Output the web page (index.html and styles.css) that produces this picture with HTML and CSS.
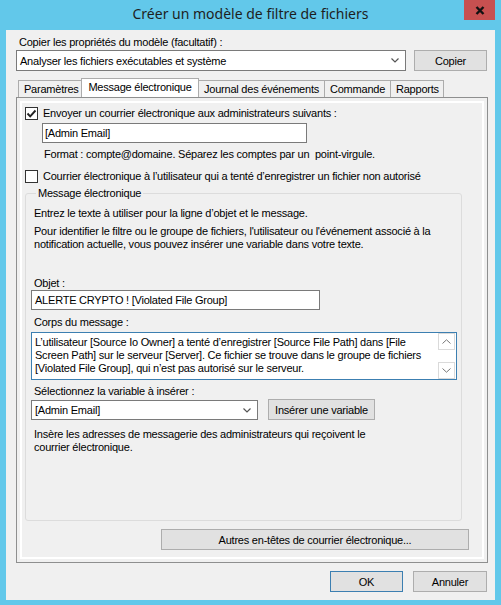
FILE: index.html
```html
<!DOCTYPE html>
<html lang="fr">
<head>
<meta charset="utf-8">
<title>Créer un modèle de filtre de fichiers</title>
<link rel="stylesheet" href="styles.css">
</head>
<body>
<div class="window">
  <div class="titlebar">
    <div></div>
    <div class="title">Créer un modèle de filtre de fichiers</div>
    <div class="close">
      <svg width="10" height="9" viewBox="0 0 10 9"><path d="M1.5 1 L8.5 8 M8.5 1 L1.5 8" stroke="#111" stroke-width="2.4" fill="none"/></svg>
    </div>
  </div>
  <div class="client">
    <div class="label">Copier les propriétés du modèle (facultatif) :</div>
    <div class="copy-row">
      <div class="combo combo-template">
        <span>Analyser les fichiers exécutables et système</span>
        <svg class="chev" width="8" height="5" viewBox="0 0 8 5"><path d="M0.5 0.5 L4 4 L7.5 0.5" stroke="#555" stroke-width="1.2" fill="none"/></svg>
      </div>
      <div class="btn btn-copy">Copier</div>
    </div>
    <div class="tabs">
      <div class="tab tab-first">Paramètres</div>
      <div class="tab tab-active">Message électronique</div>
      <div class="tab">Journal des événements</div>
      <div class="tab">Commande</div>
      <div class="tab">Rapports</div>
    </div>
    <div class="panel">
      <div class="page">
        <div class="check-row">
          <span class="checkbox"><svg width="11" height="11" viewBox="0 0 11 11"><path d="M1.5 5.5 L4.2 8.3 L9.5 2.5" stroke="#222" stroke-width="1.9" fill="none"/></svg></span>
          <span class="label">Envoyer un courrier électronique aux administrateurs suivants :</span>
        </div>
        <div class="field email-field">[Admin Email]</div>
        <div class="label hint">Format : compte@domaine. Séparez les comptes par un &nbsp;point-virgule.</div>
        <div class="check-row check-row-2">
          <span class="checkbox"></span>
          <span class="label">Courrier électronique à l’utilisateur qui a tenté d’enregistrer un fichier non autorisé</span>
        </div>
        <fieldset class="group">
          <legend class="legend">Message électronique</legend>
          <div class="label g-label intro-1">Entrez le texte à utiliser pour la ligne d’objet et le message.</div>
          <div class="label g-label intro-2">Pour identifier le filtre ou le groupe de fichiers, l'utilisateur ou l'événement associé à la<br>notification actuelle, vous pouvez insérer une variable dans votre texte.</div>
          <div class="label g-label subject-label">Objet :</div>
          <div class="field subject-field">ALERTE CRYPTO ! [Violated File Group]</div>
          <div class="label g-label body-label">Corps du message :</div>
          <div class="textarea">
            <div class="textarea-text">L’utilisateur [Source Io Owner] a tenté d’enregistrer [Source File Path] dans [File<br>Screen Path] sur le serveur [Server]. Ce fichier se trouve dans le groupe de fichiers<br>[Violated File Group], qui n’est pas autorisé sur le serveur.</div>
            <div class="scrollbar">
              <div class="sb-btn"><svg width="9" height="5" viewBox="0 0 9 5"><path d="M0.5 4.5 L4.5 0.8 L8.5 4.5" stroke="#777" stroke-width="1" fill="none"/></svg></div>
              <div class="sb-track"></div>
              <div class="sb-btn"><svg width="9" height="5" viewBox="0 0 9 5"><path d="M0.5 0.5 L4.5 4.2 L8.5 0.5" stroke="#777" stroke-width="1" fill="none"/></svg></div>
            </div>
          </div>
          <div class="label g-label var-label">Sélectionnez la variable à insérer :</div>
          <div class="var-row">
            <div class="combo combo-var">
              <span>[Admin Email]</span>
              <svg class="chev" width="8" height="5" viewBox="0 0 8 5"><path d="M0.5 0.5 L4 4 L7.5 0.5" stroke="#555" stroke-width="1.2" fill="none"/></svg>
            </div>
            <div class="btn btn-insert">Insérer une variable</div>
          </div>
          <div class="label g-label var-help">Insère les adresses de messagerie des administrateurs qui reçoivent le<br>courrier électronique.</div>
        </fieldset>
        <div class="btn btn-headers">Autres en-têtes de courrier électronique...</div>
      </div>
    </div>
    <div class="footer">
      <div class="btn btn-ok">OK</div>
      <div class="btn btn-cancel">Annuler</div>
    </div>
  </div>
</div>
</body>
</html>
```
FILE: styles.css
```css
* { box-sizing: border-box; }

body {
  margin: 0;
  background: #62c8ea;
  font-family: "Liberation Sans", Arial, sans-serif;
  font-size: 11px;
  letter-spacing: -0.22px;
  color: #000;
}

.window {
  width: 501px;
  height: 605px;
  background: #62c8ea;
}

.titlebar {
  height: 30px;
  display: grid;
  grid-template-columns: 1fr auto 1fr;
}

.title {
  font-family: "Noto Sans", "Open Sans", sans-serif;
  font-size: 14px;
  letter-spacing: 0;
  line-height: 28px;
  color: #1e1e1e;
  white-space: nowrap;
}

.close {
  justify-self: end;
  width: 31px;
  height: 20px;
  margin-right: 6px;
  background: #c75050;
  display: flex;
  align-items: center;
  justify-content: center;
}

.client {
  margin-left: 6px;
  width: 489px;
  height: 570px;
  background: #f0f0f0;
  padding: 6px 7px 0 10px;
  display: flex;
  flex-direction: column;
}

.label {
  line-height: 13px;
  white-space: nowrap;
}

.client > .label { margin-left: 3px; }

.copy-row {
  display: flex;
  justify-content: space-between;
  margin-top: 1px;
  margin-right: 1px;
}

.combo {
  display: flex;
  align-items: center;
  justify-content: space-between;
  background: #fff;
  border: 1px solid #7a7a7a;
  padding: 0 6px 0 3px;
}

.combo-template { width: 390px; height: 21px; }

.btn {
  display: flex;
  align-items: center;
  justify-content: center;
  background: #e1e1e1;
  border: 1px solid #adadad;
  white-space: nowrap;
}

.btn-copy { width: 73px; height: 21px; }

.tabs {
  display: flex;
  align-items: flex-end;
  height: 20px;
  margin-top: 7px;
  padding-left: 2px;
}

.tab {
  height: 17px;
  margin-bottom: 1px;
  border: 1px solid #acacac;
  border-bottom: none;
  border-left: none;
  background: #f0f0f0;
  padding: 0 5px;
  line-height: 16px;
  white-space: nowrap;
  text-align: center;
}

.tab-first { border-left: 1px solid #acacac; width: 64px; }
.tab-active {
  width: 118px;
  height: 20px;
  margin-bottom: 0;
  background: #fff;
  border-left: 1px solid #acacac;
  margin-left: -1px;
  padding-bottom: 3px;
}
.tab:nth-child(3) { width: 126px; border-left: none; }
.tab:nth-child(4) { width: 66px; }
.tab:nth-child(5) { width: 53px; }

.panel {
  margin-top: -1px;
  width: 472px;
  height: 466px;
  border: 1px solid #8e8f8f;
  background: #f0f0f0;
  padding: 3px;
}

.page {
  height: 100%;
  border: 2px solid #fff;
  background: #f0f0f0;
  padding-top: 4px;
  display: flex;
  flex-direction: column;
  align-items: flex-start;
}

.check-row {
  display: flex;
  align-items: center;
  gap: 5px;
  margin-left: 3px;
  height: 13px;
}

.check-row-2 { margin-top: 9px; }

.checkbox {
  width: 13px;
  height: 13px;
  border: 1px solid #333;
  background: #fff;
  display: flex;
  align-items: center;
  justify-content: center;
}

.field {
  height: 20px;
  background: #fff;
  border: 1px solid #7a7a7a;
  display: flex;
  align-items: center;
  padding-left: 2px;
  white-space: nowrap;
}

.email-field { width: 265px; margin-left: 20px; margin-top: 3px; }

.hint { margin-left: 22px; margin-top: 5px; }

.group {
  margin: 4px 0 0 3px;
  width: 437px;
  height: 334px;
  border: 1px solid #dcdcdc;
  border-radius: 3px;
  padding: 0 0 0 5px;
  min-width: 0;
}

.legend {
  padding: 0 2px;
  margin-left: 5px;
  line-height: 13px;
}

.g-label { margin-left: 3px; }
.intro-1 { margin-top: 7px; }
.intro-2 { margin-top: 5px; }
.subject-label { margin-top: 26px; }
.subject-field { width: 289px; padding-left: 3px; }
.body-label { margin-top: 6px; }

.textarea {
  margin-top: 3px;
  width: 426px;
  height: 48px;
  border: 1px solid #3c7fb1;
  background: #fff;
  display: flex;
  justify-content: space-between;
}

.textarea-text {
  padding: 3px 0 0 3px;
  line-height: 13px;
  white-space: nowrap;
}

.scrollbar {
  width: 18px;
  display: flex;
  flex-direction: column;
  padding: 0 1px 0 0;
}

.sb-btn {
  height: 17px;
  border: 1px solid #dadada;
  display: flex;
  align-items: center;
  justify-content: center;
}

.sb-track { flex: 1; }

.var-label { margin-top: 5px; }

.var-row {
  display: flex;
  align-items: flex-end;
  gap: 10px;
  margin-top: 1px;
}

.combo-var { width: 227px; height: 20px; padding-left: 3px; }

.btn-insert { width: 107px; height: 21px; }

.var-help { margin-top: 8px; }

.btn-headers {
  margin: 8px 0 0 139px;
  width: 308px;
  height: 21px;
}

.footer {
  display: flex;
  justify-content: flex-end;
  gap: 10px;
  margin-top: 8px;
  margin-right: 1px;
}

.btn-ok { width: 73px; height: 21px; border-color: #3c7fb1; }
.btn-cancel { width: 74px; height: 21px; }
```
